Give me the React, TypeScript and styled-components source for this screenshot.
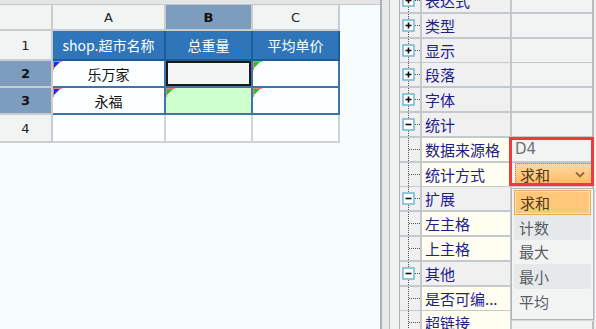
import React from "react";
import styled, { createGlobalStyle, css } from "styled-components";

const GlobalStyle = createGlobalStyle`
  html, body {
    margin: 0;
    padding: 0;
    background: #f1f1f1;
  }
  * {
    box-sizing: border-box;
  }
`;

const cjk = `"Noto Sans CJK SC", "Noto Sans", sans-serif`;

const Page = styled.div`
  position: relative;
  display: flex;
  width: 596px;
  height: 329px;
  overflow: hidden;
  font-family: ${cjk};
`;

// ---------- spreadsheet ----------
const Sheet = styled.div`
  width: 380px;
  height: 100%;
  background: #f7fdfd;
  display: flex;
  flex-direction: column;
`;

const TopStrip = styled.div`
  height: 5px;
  background: #e4e6e6;
  border-bottom: 1px solid #c4c8c8;
`;

const Grid = styled.div`
  display: grid;
  grid-template-columns: 53px 113px 87px 87px;
  grid-template-rows: 26px 30px 27px 27px 28px;
  width: 340px;
`;

const HeadCell = styled.div<{ $selected?: boolean }>`
  display: flex;
  align-items: center;
  justify-content: center;
  background: #f2f4f4;
  border-right: 2px solid #c9cdcd;
  border-bottom: 2px solid #c9cdcd;
  font-family: "DejaVu Sans", sans-serif;
  font-size: 13px;
  color: #222;
  ${(p) =>
    p.$selected &&
    css`
      background: #7d9dbf;
      font-weight: bold;
      color: #111;
    `}
`;

const Cell = styled.div<{ $tone?: "title" | "plain" | "picked" | "green" | "empty" }>`
  position: relative;
  display: flex;
  align-items: center;
  justify-content: center;
  font-size: 14px;
  color: #111;
  background: #fbffff;
  border-right: 2px solid #3f74aa;
  border-bottom: 2px solid #3f74aa;
  ${(p) =>
    p.$tone === "title" &&
    css`
      background: #2e76b9;
      color: #fff;
      border-color: #1e5b98;
    `}
  ${(p) =>
    p.$tone === "picked" &&
    css`
      background: #f4f5f5;
      box-shadow: inset 0 0 0 2px #1a1a1a;
    `}
  ${(p) =>
    p.$tone === "green" &&
    css`
      background: #ccffcc;
    `}
  ${(p) =>
    p.$tone === "empty" &&
    css`
      border-color: #cfd3d3;
    `}
`;

const Corner = styled.span<{ $color: string }>`
  position: absolute;
  top: 0;
  left: 0;
  width: 0;
  height: 0;
  border-top: 8px solid ${(p) => p.$color};
  border-right: 8px solid transparent;
  &::before {
    content: "";
    position: absolute;
    top: -8px;
    left: 0;
    width: 9px;
    height: 1px;
    background: #f07a8a;
  }
  &::after {
    content: "";
    position: absolute;
    top: -8px;
    left: 0;
    width: 1px;
    height: 9px;
    background: #f07a8a;
  }
`;

// ---------- splitter ----------
const Splitter = styled.div`
  width: 10px;
  height: 100%;
  background: #e8eaea;
  border-left: 2px solid #aab2b7;
  border-right: 1px solid #b5bbbe;
`;

// ---------- property panel ----------
const Panel = styled.div`
  position: relative;
  flex: 1;
  height: 100%;
  background: #f1f1f1;
  padding-left: 9px;
`;

const PropList = styled.div`
  margin-top: -11px;
  width: 195px;
  border-left: 1px solid #a9b1b6;
  border-right: 2px solid #b7bec2;
`;

const PropRow = styled.div`
  display: grid;
  grid-template-columns: 22px 90px 1fr;
  height: 24.8px;
  border-bottom: 2px solid #c3c9cc;
`;

const Gutter = styled.div`
  background: #f0f0f0;
  border-right: 2px solid #c3c9cc;
  svg {
    display: block;
  }
`;

const Label = styled.div<{ $child?: boolean }>`
  display: flex;
  align-items: center;
  padding-left: 3px;
  font-size: 15px;
  color: #1c218a;
  white-space: nowrap;
  overflow: hidden;
  background: ${(p) => (p.$child ? "#fffef0" : "#f0f0f0")};
  border-right: 2px solid #c3c9cc;
`;

const Value = styled.div`
  display: flex;
  align-items: center;
  padding-left: 3px;
  background: #f2f4f4;
  font-size: 15px;
  color: #6e7378;
  font-family: "DejaVu Sans", ${cjk};
`;

const Combo = styled.div`
  display: flex;
  align-items: center;
  justify-content: space-between;
  width: 100%;
  height: 100%;
  padding: 0 6px 0 4px;
  background: linear-gradient(#ffd9a0, #ffb962);
  border: 1px dotted #b9803c;
  font-size: 15px;
  color: #4a3818;
`;

const Chevron = styled.svg`
  width: 10px;
  height: 7px;
`;

const Highlight = styled.div`
  position: absolute;
  left: 119px;
  top: 137px;
  width: 85px;
  height: 49px;
  border: 3px solid #f03a3a;
  pointer-events: none;
`;

const Dropdown = styled.div`
  position: absolute;
  left: 121px;
  top: 188px;
  width: 83px;
  height: 132px;
  padding: 1px 2px;
  background: #f2f4f4;
  border: 1px solid #aeb5b9;
  box-shadow: 1px 1px 0 #d5d9db;
`;

const Option = styled.div<{ $active?: boolean; $shade?: boolean }>`
  display: flex;
  align-items: center;
  height: 24.8px;
  padding-left: 5px;
  font-size: 15px;
  color: #5a5e62;
  background: ${(p) => (p.$shade ? "#e6e9e9" : "#f2f4f4")};
  ${(p) =>
    p.$active &&
    css`
      background: #ffc77a;
      color: #4a3818;
      border: 1px solid #e2a85c;
      box-shadow: inset 0 0 0 1px #ffe2b4;
    `}
`;

type TreeNode = { label: string; kind: "open" | "closed" | "child" };

const nodes: TreeNode[] = [
  { label: "表达式", kind: "closed" },
  { label: "类型", kind: "closed" },
  { label: "显示", kind: "closed" },
  { label: "段落", kind: "closed" },
  { label: "字体", kind: "closed" },
  { label: "统计", kind: "open" },
  { label: "数据来源格", kind: "child" },
  { label: "统计方式", kind: "child" },
  { label: "扩展", kind: "open" },
  { label: "左主格", kind: "child" },
  { label: "上主格", kind: "child" },
  { label: "其他", kind: "open" },
  { label: "是否可编...", kind: "child" },
  { label: "超链接", kind: "child" },
];

const TreeMark: React.FC<{ kind: TreeNode["kind"] }> = ({ kind }) => (
  <svg width="20" height="23" viewBox="0 0 20 23">
    <line x1="8.5" y1="0" x2="8.5" y2="23" stroke="#555" strokeWidth="1" strokeDasharray="1 1" />
    <line x1="9" y1="11.5" x2="20" y2="11.5" stroke="#555" strokeWidth="1" strokeDasharray="1 1" />
    {kind !== "child" && (
      <g>
        <rect x="3" y="6" width="11" height="11" fill="#fff" stroke="#6cb6d8" strokeWidth="1.5" />
        <line x1="5.5" y1="11.5" x2="11.5" y2="11.5" stroke="#111" strokeWidth="1.6" />
        {kind === "closed" && (
          <line x1="8.5" y1="8.5" x2="8.5" y2="14.5" stroke="#111" strokeWidth="1.6" />
        )}
      </g>
    )}
  </svg>
);

const options = ["求和", "计数", "最大", "最小", "平均"];

const App: React.FC = () => {
  return (
    <Page>
      <GlobalStyle />
      <Sheet>
        <TopStrip />
        <Grid>
          <HeadCell />
          <HeadCell>A</HeadCell>
          <HeadCell $selected>B</HeadCell>
          <HeadCell>C</HeadCell>

          <HeadCell>1</HeadCell>
          <Cell $tone="title">shop.超市名称</Cell>
          <Cell $tone="title">总重量</Cell>
          <Cell $tone="title">平均单价</Cell>

          <HeadCell $selected>2</HeadCell>
          <Cell>
            <Corner $color="#1d2fe0" />
            乐万家
          </Cell>
          <Cell $tone="picked" />
          <Cell>
            <Corner $color="#22c622" />
          </Cell>

          <HeadCell $selected>3</HeadCell>
          <Cell>
            <Corner $color="#1d2fe0" />
            永福
          </Cell>
          <Cell $tone="green">
            <Corner $color="#22c622" />
          </Cell>
          <Cell>
            <Corner $color="#22c622" />
          </Cell>

          <HeadCell>4</HeadCell>
          <Cell $tone="empty" />
          <Cell $tone="empty" />
          <Cell $tone="empty" />
        </Grid>
      </Sheet>
      <Splitter />
      <Panel>
        <PropList>
          {nodes.map((n) => (
            <PropRow key={n.label}>
              <Gutter>
                <TreeMark kind={n.kind} />
              </Gutter>
              <Label $child={n.kind === "child"}>{n.label}</Label>
              <Value>
                {n.label === "数据来源格" && "D4"}
                {n.label === "统计方式" && (
                  <Combo>
                    求和
                    <Chevron viewBox="0 0 10 7">
                      <path d="M1 1.5 L5 5.5 L9 1.5" fill="none" stroke="#8a6a44" strokeWidth="1.8" />
                    </Chevron>
                  </Combo>
                )}
              </Value>
            </PropRow>
          ))}
        </PropList>
        <Highlight />
        <Dropdown>
          {options.map((o, i) => (
            <Option key={o} $active={i === 0} $shade={i % 2 === 1}>
              {o}
            </Option>
          ))}
        </Dropdown>
      </Panel>
    </Page>
  );
};

export default App;
